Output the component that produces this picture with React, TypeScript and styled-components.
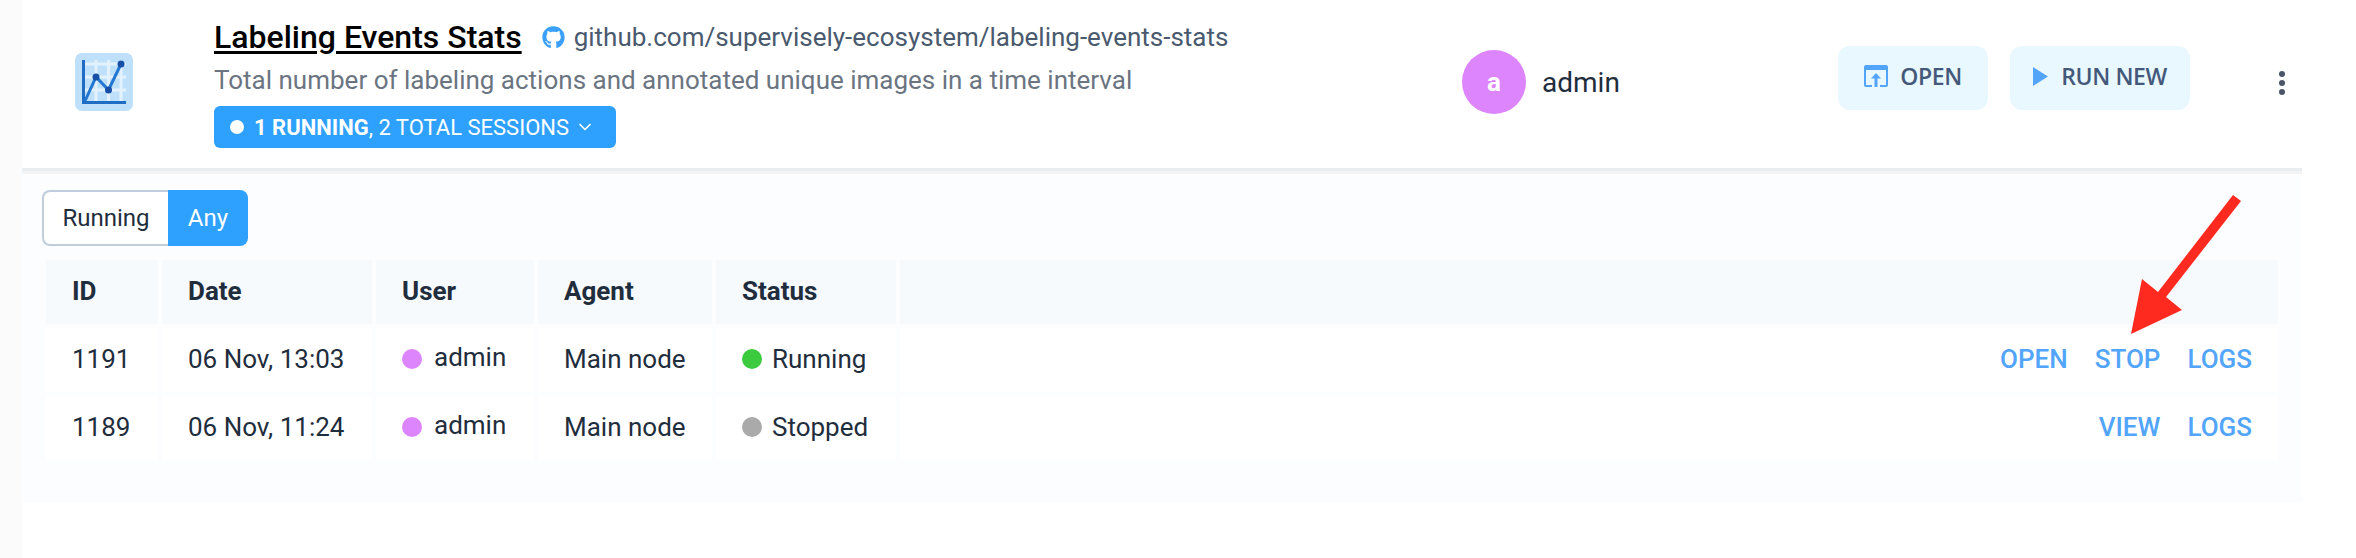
import React from 'react'
import styled, { createGlobalStyle } from 'styled-components'
import { ChevronDown } from 'lucide-react'
import { FaGithub } from 'react-icons/fa'

const GlobalStyle = createGlobalStyle`
  html, body {
    margin: 0;
    padding: 0;
    background: #fff;
    font-family: Roboto, "Liberation Sans", sans-serif;
    color: #1f2d3d;
  }
`

const Page = styled.div`
  position: relative;
  width: 2356px;
  height: 558px;
  overflow: hidden;
  display: flex;
`

const LeftStrip = styled.div`
  width: 22px;
  flex: none;
  background: #fbfbfb;
`

const Panel = styled.div`
  width: 2280px;
  flex: none;
  align-self: flex-start;
`

const Header = styled.header`
  height: 168px;
  display: flex;
  align-items: flex-start;
  background: #fff;
  border-bottom: 3px solid #e9edf0;
`

const AppIconBox = styled.div`
  width: 58px;
  height: 58px;
  margin: 53px 81px 0 53px;
  flex: none;
`

const AppInfo = styled.div`
  width: 1248px;
  flex: none;
  padding-top: 17px;
`

const TitleRow = styled.div`
  display: flex;
  align-items: center;
  height: 40px;
`

const Title = styled.a`
  font-size: 32px;
  font-weight: 500;
  color: #000;
  text-decoration: underline;
  text-decoration-thickness: 3px;
  text-underline-offset: 3px;
`

const RepoLink = styled.span`
  display: inline-flex;
  align-items: center;
  gap: 9px;
  margin-left: 20px;
  font-size: 26px;
  color: #4a5a6e;

  svg {
    color: #3aa0fb;
  }
`

const Description = styled.div`
  margin-top: 6px;
  height: 34px;
  line-height: 34px;
  font-size: 26px;
  color: #6b7582;
`

const SessionsChip = styled.div`
  display: inline-flex;
  align-items: center;
  box-sizing: border-box;
  width: 402px;
  height: 42px;
  margin-top: 9px;
  padding-left: 16px;
  border-radius: 6px;
  background: #2ea1ff;
  color: #fff;
  font-size: 22px;
  white-space: nowrap;

  b {
    font-weight: 700;
  }
`

const ChipDot = styled.span`
  width: 14px;
  height: 14px;
  margin-right: 10px;
  border-radius: 50%;
  background: #fff;
`

const ChipChevron = styled(ChevronDown)`
  margin-left: 6px;
`

const Owner = styled.div`
  width: 376px;
  flex: none;
  margin-top: 50px;
  display: flex;
  align-items: center;
  gap: 16px;
  font-size: 28px;
  color: #1f2d3d;
`

const Avatar = styled.div`
  width: 64px;
  height: 64px;
  border-radius: 50%;
  background: #dd85fd;
  color: #fff;
  font-size: 26px;
  font-weight: 700;
  display: flex;
  align-items: center;
  justify-content: center;
`

const HeaderButton = styled.button<{ $width: number; $gap: number }>`
  box-sizing: border-box;
  width: ${(p) => p.$width}px;
  height: 64px;
  margin-top: 46px;
  margin-right: 22px;
  border: none;
  border-radius: 12px;
  background: #e9f7fe;
  color: #44597a;
  font-family: "Open Sans", sans-serif;
  font-size: 23px;
  font-weight: 600;
  letter-spacing: -0.4px;
  display: flex;
  align-items: center;
  justify-content: center;
  gap: ${(p) => p.$gap}px;
  padding: 0 0 4px;
`

const MoreDots = styled.div`
  margin: 71px 0 0 67px;
  display: flex;
  flex-direction: column;
  gap: 3px;

  span {
    width: 6px;
    height: 6px;
    border-radius: 50%;
    background: #4a5568;
  }
`

const Body = styled.div`
  background: #fcfdfe;
  border-top: 3px solid #f3f4f5;
  padding: 16px 20px 39px 20px;
`

const Toggle = styled.div`
  display: inline-flex;
  height: 56px;
  box-sizing: border-box;
  vertical-align: top;
`

const ToggleItem = styled.div<{ $active?: boolean }>`
  box-sizing: border-box;
  height: 56px;
  display: flex;
  align-items: center;
  justify-content: center;
  font-size: 24px;
  width: ${(p) => (p.$active ? 80 : 126)}px;
  background: ${(p) => (p.$active ? '#2ea1ff' : '#fff')};
  color: ${(p) => (p.$active ? '#fff' : '#1f2d3d')};
  border: ${(p) => (p.$active ? 'none' : '2px solid #bfcddc')};
  border-right: none;
  border-radius: ${(p) => (p.$active ? '0 8px 8px 0' : '8px 0 0 8px')};
`

const Table = styled.table`
  width: 2240px;
  margin-top: 10px;
  border-collapse: separate;
  border-spacing: 4px;
  table-layout: fixed;
  font-size: 26px;
`

const HeadCell = styled.th<{ $width?: number }>`
  height: 64px;
  padding: 0 0 2px 26px;
  background: #f6fafd;
  text-align: left;
  font-weight: 700;
  color: #1f2d3d;
  ${(p) => (p.$width ? `width: ${p.$width}px;` : '')}
  box-sizing: border-box;
`

const Cell = styled.td`
  height: 64px;
  padding: 0 0 2px 26px;
  background: #fff;
  color: #1f2d3d;
  box-sizing: border-box;
  white-space: nowrap;
`

const DotLabel = styled.span`
  display: inline-flex;
  align-items: center;
  gap: 10px;
`

const UserName = styled.span`
  margin: 0 0 4px 2px;
`

const Dot = styled.span<{ $color: string }>`
  width: 20px;
  height: 20px;
  border-radius: 50%;
  background: ${(p) => p.$color};
`

const ActionsCell = styled(Cell)`
  padding: 0 26px 2px 0;
  text-align: right;
`

const Action = styled.a`
  margin-left: 27px;
  color: #52a5fb;
  font-size: 26px;
  font-weight: 500;
`

const Arrow = styled.svg`
  position: absolute;
  left: 2120px;
  top: 190px;
`

const sessions = [
  { id: 1191, date: '06 Nov, 13:03', status: 'Running', color: '#3ccb3f', actions: ['OPEN', 'STOP', 'LOGS'] },
  { id: 1189, date: '06 Nov, 11:24', status: 'Stopped', color: '#aaaaaa', actions: ['VIEW', 'LOGS'] },
]

const ChartIcon = () => (
  <svg width="58" height="58" viewBox="0 0 58 58">
    <rect width="58" height="58" rx="7" fill="#bfe0fb" />
    <path d="M9 11H51M9 24H51M9 37H51M21 7V48M33.5 7V48M46 7V48" stroke="#e3f1fd" strokeWidth="3" fill="none" />
    <path d="M8.5 7V49.5H51" stroke="#1e6cc4" strokeWidth="3" fill="none" />
    <path d="M10 48L21 24L33.5 37L46 11" stroke="#2277d0" strokeWidth="3" fill="none" />
    <circle cx="21" cy="24" r="3.5" fill="#174ea6" />
    <circle cx="33.5" cy="37" r="3.5" fill="#174ea6" />
    <circle cx="46" cy="11" r="3.5" fill="#174ea6" />
  </svg>
)

const OpenIcon = () => (
  <svg width="24" height="22" viewBox="0 0 24 22">
    <path d="M0 2Q0 0 2 0H22Q24 0 24 2V20Q24 22 22 22H16V20H22V5H2V20H8V22H2Q0 22 0 20Z" fill="#52a5fb" />
    <path d="M12 8L17 13.5H13.5V22H10.5V13.5H7Z" fill="#52a5fb" />
  </svg>
)

const PlayIcon = () => (
  <svg width="15" height="19" viewBox="0 0 15 19">
    <path d="M0 0L15 9.5L0 19Z" fill="#52a5fb" />
  </svg>
)

export default function App() {
  return (
    <Page>
      <GlobalStyle />
      <LeftStrip />
      <Panel>
        <Header>
          <AppIconBox>
            <ChartIcon />
          </AppIconBox>
          <AppInfo>
            <TitleRow>
              <Title>Labeling Events Stats</Title>
              <RepoLink>
                <FaGithub size={23} />
                github.com/supervisely-ecosystem/labeling-events-stats
              </RepoLink>
            </TitleRow>
            <Description>Total number of labeling actions and annotated unique images in a time interval</Description>
            <SessionsChip>
              <ChipDot />
              <span>
                <b>1 RUNNING</b>, 2 TOTAL SESSIONS
              </span>
              <ChipChevron size={20} />
            </SessionsChip>
          </AppInfo>
          <Owner>
            <Avatar>a</Avatar>
            admin
          </Owner>
          <HeaderButton $width={150} $gap={12}>
            <OpenIcon />
            OPEN
          </HeaderButton>
          <HeaderButton $width={180} $gap={13}>
            <PlayIcon />
            RUN NEW
          </HeaderButton>
          <MoreDots>
            <span />
            <span />
            <span />
          </MoreDots>
        </Header>
        <Body>
          <Toggle>
            <ToggleItem>Running</ToggleItem>
            <ToggleItem $active>Any</ToggleItem>
          </Toggle>
          <Table>
            <thead>
              <tr>
                <HeadCell $width={112}>ID</HeadCell>
                <HeadCell $width={210}>Date</HeadCell>
                <HeadCell $width={158}>User</HeadCell>
                <HeadCell $width={174}>Agent</HeadCell>
                <HeadCell $width={180}>Status</HeadCell>
                <HeadCell />
              </tr>
            </thead>
            <tbody>
              {sessions.map((s) => (
                <tr key={s.id}>
                  <Cell>{s.id}</Cell>
                  <Cell>{s.date}</Cell>
                  <Cell>
                    <DotLabel>
                      <Dot $color="#dd85fd" />
                      <UserName>admin</UserName>
                    </DotLabel>
                  </Cell>
                  <Cell>Main node</Cell>
                  <Cell>
                    <DotLabel>
                      <Dot $color={s.color} />
                      {s.status}
                    </DotLabel>
                  </Cell>
                  <ActionsCell>
                    {s.actions.map((a) => (
                      <Action key={a}>{a}</Action>
                    ))}
                  </ActionsCell>
                </tr>
              ))}
            </tbody>
          </Table>
        </Body>
      </Panel>
      <Arrow width="130" height="150" viewBox="0 0 130 150">
        <path d="M113 5L121 11L46 107L62 120L11 144L22 89L38 102Z" fill="#ff2a1f" />
      </Arrow>
    </Page>
  )
}
